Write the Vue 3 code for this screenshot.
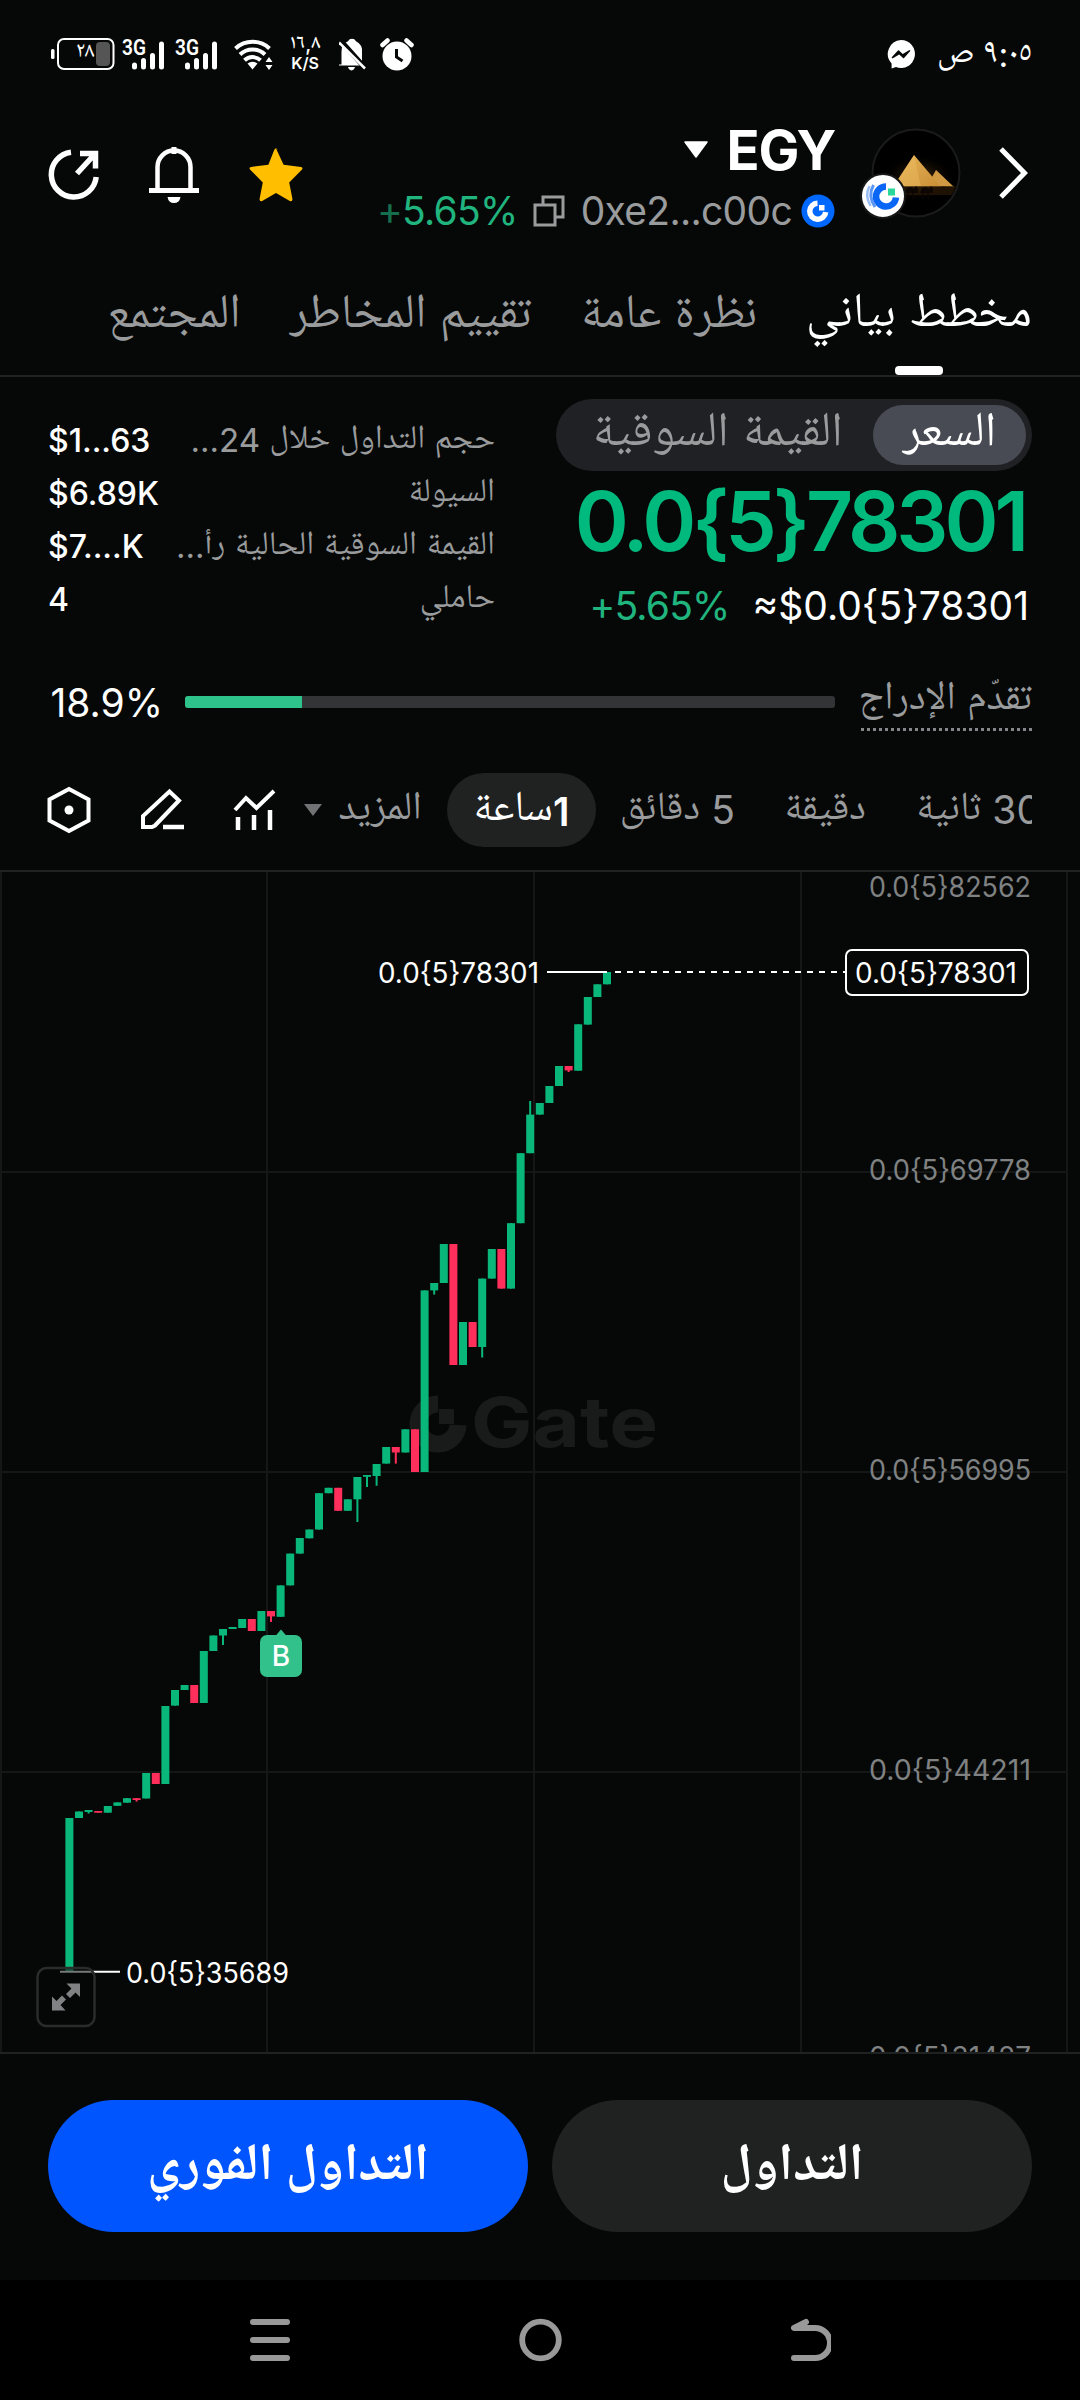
<template>
  <div class="screen" dir="rtl">
    <div class="status-bar">
      <div class="status-side">
        <span class="clock">٩:٠٥ ص</span>
        <svg class="messenger" width="28" height="29" viewBox="0 0 28 29">
          <path d="M14 0a14 14 0 1 1-5 27.1L4.600 28.600V23.500A14 14 0 0 1 14 0z" fill="#fff" />
          <path d="M5.500 17.500l6-6.500 4.200 4 6.800-4.200-6 6.700-4.300-4z" fill="#060807" stroke="#060807" stroke-width="1.500" stroke-linejoin="round" />
        </svg>
      </div>
      <div class="status-icons" dir="ltr">
        <svg width="64" height="34" viewBox="0 0 64 34">
          <rect x="0" y="12" width="3.500" height="10" rx="1.500" fill="#fff" />
          <rect x="7" y="2" width="55.500" height="30" rx="6" fill="none" stroke="#fff" stroke-width="2" />
          <rect x="45" y="5" width="14" height="24" rx="4" fill="#555" />
          <text x="34" y="23" class="battery-text" text-anchor="middle">٢٨</text>
        </svg>
        <svg v-for="n in 2" :key="n" class="signal" width="44" height="34" viewBox="0 0 44 34">
          <text x="0" y="18" class="signal-text" textLength="24" lengthAdjust="spacingAndGlyphs">3G</text>
          <path d="M12.500 28v2M21.500 23.500v6.500M30.500 18.500v11.500M39.500 7v23" stroke="#fff" stroke-width="5" stroke-linecap="round" />
        </svg>
        <svg class="wifi" width="40" height="34" viewBox="0 0 40 34">
          <g fill="none" stroke="#fff" stroke-width="4">
            <path d="M1.500 11.500a25 25 0 0 1 34 0" />
            <path d="M6 17.500a18 18 0 0 1 25 0" />
            <path d="M10.500 23.300a11.500 11.500 0 0 1 16 0" />
          </g>
          <path d="M13.500 26.500q5-3.500 10 0l-5 6z" fill="#fff" />
          <path d="M35 20l3.500 5h-7zM35 33l3.500-5h-7z" fill="#fff" />
        </svg>
        <div class="speed">
          <span>١٦,٨</span>
          <span class="speed-unit">K/S</span>
        </div>
        <svg class="mute" width="28" height="34" viewBox="0 0 28 34">
          <path d="M2.500 28V15A11 11 0 0 1 9 4.200a4.500 4.500 0 0 1 8 0A11 11 0 0 1 23 15v13z" fill="#fff" />
          <path d="M9.500 30.500h6q-1 2.500-3 2.500t-3-2.500zM0 28h25" fill="#fff" stroke="#fff" stroke-width="1" />
          <path d="M2 4l25 28" stroke="#060807" stroke-width="5" />
          <path d="M0 5.500l26 26" stroke="#fff" stroke-width="2.500" />
        </svg>
        <svg class="alarm" width="34" height="34" viewBox="0 0 34 34">
          <circle cx="17" cy="19" r="14.500" fill="#fff" />
          <path d="M2.500 8l5-4.500M31.500 8l-5-4.500" stroke="#fff" stroke-width="4.500" stroke-linecap="round" />
          <path d="M16.500 12v8l6 4" fill="none" stroke="#060807" stroke-width="3" />
        </svg>
      </div>
    </div>

    <header class="header">
      <div class="header-token">
        <svg class="chevron" width="30" height="54" viewBox="0 0 30 54">
          <path d="M2 3l23.500 24L2 51" fill="none" stroke="#fff" stroke-width="5" />
        </svg>
        <div class="avatar">
          <svg width="90" height="90" viewBox="0 0 90 90">
            <defs>
              <clipPath id="avatar-clip"><circle cx="45" cy="45" r="42" /></clipPath>
              <radialGradient id="glow">
                <stop offset="0" stop-color="#5a380f" />
                <stop offset="1" stop-color="#000" stop-opacity="0" />
              </radialGradient>
              <linearGradient id="stone" x1="0" y1="0" x2="1" y2="1">
                <stop offset="0" stop-color="#e9b356" />
                <stop offset="1" stop-color="#c98f38" />
              </linearGradient>
            </defs>
            <circle cx="45" cy="45" r="43.500" fill="#000" stroke="#1b1b1b" stroke-width="2" />
            <g clip-path="url(#avatar-clip)">
              <ellipse cx="48" cy="50" rx="36" ry="24" fill="url(#glow)" />
              <path d="M56 58l9-16 18 17z" fill="#d09a42" />
              <path d="M43 27l27 32H22z" fill="url(#stone)" />
              <path d="M43 27l-21 32h28z" fill="#f3c56b" opacity=".35" />
              <path d="M27 58h58v9H27z" fill="#2b1905" opacity=".7" />
              <path d="M34 65l2-5 4-1 3 2 2-3 2 3v4zM49 65l2-5 4-1 3 2 2-3 2 3v4z" fill="#0d0602" />
              <path d="M37 63v8M42 63v8M52 63v8M57 63v8" stroke="#0d0602" stroke-width="1.500" />
              <text x="28" y="80" class="avatar-text">Egypt</text>
            </g>
          </svg>
          <svg class="chain-badge" width="46" height="46" viewBox="0 0 46 46">
            <circle cx="23" cy="23" r="22" fill="#fff" stroke="#171717" stroke-width="2" />
            <path d="M9.500 13q-5 9.500 1 20" fill="none" stroke="#9cbef5" stroke-width="2.500" />
            <path d="M13.500 12q-6 10.500 1.500 22" fill="none" stroke="#5c97f5" stroke-width="3" />
            <path d="M26 13.500a10 10 0 1 0 10 11" fill="none" stroke="#0a66f5" stroke-width="6.500" />
            <rect x="28" y="15.500" width="7" height="7" fill="#2bd69a" />
          </svg>
        </div>
        <div class="token-info">
          <div class="token-name">
            <span>EGY</span>
            <svg width="26" height="18" viewBox="0 0 26 18">
              <path d="M2 1h22L13 16z" fill="#fff" stroke="#fff" stroke-linejoin="round" stroke-width="1.500" />
            </svg>
          </div>
          <div class="token-sub">
            <svg width="34" height="34" viewBox="0 0 34 34">
              <circle cx="17" cy="17" r="16.500" fill="#0068ff" />
              <path d="M16.500 9.200a8 8 0 1 0 8.200 9" fill="none" stroke="#fff" stroke-width="5.500" />
              <rect x="18" y="11" width="5.500" height="5.500" fill="#fff" />
            </svg>
            <span class="address" dir="ltr">0xe2...c00c</span>
            <svg class="copy" width="32" height="32" viewBox="0 0 32 32">
              <path d="M2 10h20v20H2zM10 9.500V2h20v20h-7" fill="none" stroke="#999b9d" stroke-width="3" />
            </svg>
            <span class="change" dir="ltr"><i>+</i>5.65%</span>
          </div>
        </div>
      </div>
      <div class="header-actions">
        <svg width="56" height="56" viewBox="0 0 56 56">
          <path d="M28 2.500l7.600 16.200 17.400 2.200q2.500.8.800 2.800L41.200 36.500l3.300 16.800q-.3 2.500-2.700 1.600L28 47l-13.800 7.900q-2.400.9-2.700-1.600l3.300-16.800L2.200 23.700q-1.700-2 .8-2.800l17.400-2.200L26.200 4q1.800-3.500 3.600 0z" fill="#ffbf00" />
        </svg>
        <svg width="50" height="58" viewBox="0 0 50 58">
          <path d="M8.500 46V22a16.500 16.500 0 0 1 33 0v24" fill="none" stroke="#fff" stroke-width="4.500" />
          <path d="M0 45.500h50M25 2v7" stroke="#fff" stroke-width="5" />
          <path d="M18.500 52h13q-1 6-6.500 6t-6.500-6z" fill="#fff" />
        </svg>
        <svg width="52" height="52" viewBox="0 0 52 52">
          <path d="M23 4.200A22.500 22.500 0 1 0 48.200 29" fill="none" stroke="#fff" stroke-width="5.500" />
          <path d="M29 25.500L46 7M32 5.500h15.500v15" fill="none" stroke="#fff" stroke-width="5.500" />
        </svg>
      </div>
    </header>

    <nav class="tabs">
      <span v-for="tab in tabs" :key="tab.label" class="tab" :class="{ active: tab.active }">{{ tab.label }}</span>
    </nav>

    <section class="summary">
      <div class="price-box">
        <div class="segment">
          <span class="segment-item active">السعر</span>
          <span class="segment-item">القيمة السوقية</span>
        </div>
        <div class="price" dir="ltr">0.0{5}78301</div>
        <div class="price-sub">
          <span dir="ltr">≈$0.0{5}78301</span>
          <span class="green" dir="ltr">+5.65%</span>
        </div>
      </div>
      <div class="stats">
        <div v-for="row in stats" :key="row.label" class="stat-row">
          <span class="stat-label">{{ row.label }}</span>
          <span class="stat-value" dir="ltr">{{ row.value }}</span>
        </div>
      </div>
    </section>

    <section class="progress">
      <span class="progress-label">تقدّم الإدراج</span>
      <div class="progress-track" dir="ltr">
        <div class="progress-fill" :style="{ width: Math.floor(progress) + '%' }"></div>
      </div>
      <span class="progress-value" dir="ltr">{{ progress }}%</span>
    </section>

    <section class="toolbar">
      <div class="intervals">
        <span class="interval first"><b>30</b> ثانية</span>
        <span class="interval minute">دقيقة</span>
        <span class="interval five"><b>5</b> دقائق</span>
        <span class="interval active"><b>1</b>ساعة</span>
        <span class="interval more">المزيد</span>
        <svg class="more-arrow" width="18" height="12" viewBox="0 0 18 12">
          <path d="M0 0h18L9 12z" fill="#707273" />
        </svg>
      </div>
      <div class="tools">
        <svg width="44" height="44" viewBox="0 0 44 44">
          <path d="M2 22l11-12 10.500 10L41 3" fill="none" stroke="#fff" stroke-width="4" />
          <path d="M5 29v13M21 27v15M37 22v20" stroke="#fff" stroke-width="4.500" />
        </svg>
        <svg width="46" height="44" viewBox="0 0 46 44">
          <path d="M4 39V28L30.500 3.500l9.500 9L16 37.500 13 39z" fill="none" stroke="#fff" stroke-width="4" />
          <path d="M24 39h21" stroke="#fff" stroke-width="4.500" />
        </svg>
        <svg width="44" height="48" viewBox="0 0 44 48">
          <path d="M22 3l19.500 10.500v21L22 45 2.500 34.500v-21z" fill="none" stroke="#fff" stroke-width="4" />
          <circle cx="22" cy="24" r="4.500" fill="#fff" />
        </svg>
      </div>
    </section>

    <section class="chart" dir="ltr">
      <!-- y coordinates follow the screen, so the view box starts below the toolbar -->
      <svg width="1080" height="1180" viewBox="0 872 1080 1180">
        <g stroke="#151717" stroke-width="2">
          <line v-for="x in gridX" :key="'x' + x" :x1="x" :x2="x" y1="872" y2="2052" />
          <line v-for="y in gridY" :key="'y' + y" x1="0" x2="1068" :y1="y" :y2="y" />
        </g>

        <g class="watermark">
          <path d="M438 1404a20 20 0 1 0 20 21" fill="none" stroke="#191b1b" stroke-width="17" />
          <rect x="439" y="1409" width="15" height="15" fill="#191b1b" />
          <text x="471" y="1447" textLength="187" lengthAdjust="spacingAndGlyphs">Gate</text>
        </g>

        <text v-for="l in axisLabels" :key="l.text" class="axis" x="869" :y="l.y" textLength="162" lengthAdjust="spacingAndGlyphs">{{ l.text }}</text>

        <g v-for="(c, i) in candles" :key="i" :fill="c.color">
          <rect :x="c.x - 4" :y="c.top" width="8" :height="c.bottom - c.top" />
          <rect :x="c.x - 1" :y="c.high" width="2" :height="c.low - c.high" />
        </g>

        <path d="M547 972h60M60 1971.700h60" stroke="#fff" stroke-width="2" />
        <path d="M615 972h230" stroke="#fff" stroke-width="2" stroke-dasharray="6 6" />
        <text class="mark" x="378" y="982.500" textLength="161" lengthAdjust="spacingAndGlyphs">0.0{5}78301</text>
        <text class="mark" x="126" y="1982.500" textLength="163" lengthAdjust="spacingAndGlyphs">0.0{5}35689</text>
        <rect x="846" y="950" width="182" height="45" rx="6" fill="#060807" stroke="#fff" stroke-width="2" />
        <text class="mark" x="855" y="983" textLength="162" lengthAdjust="spacingAndGlyphs">0.0{5}78301</text>

        <path d="M281 1629.500l6 7h-12z" fill="#32c18a" />
        <rect x="260" y="1635" width="42" height="42" rx="7" fill="#32c18a" />
        <text class="mark buy" x="281" y="1666" text-anchor="middle">B</text>

        <rect x="37.500" y="1968" width="57" height="58" rx="9" fill="#060807" fill-opacity=".55" stroke="#2a2c2c" stroke-width="2.500" />
        <path d="M66.500 1983.500H80v13.500l-4.500-4.500-5.500 5.500-4-4 5.500-5.500zM52 1996.500l4.500 4.500 5.500-5.500 4 4-5.500 5.500 5 5.500H52z" fill="#808283" />
      </svg>
    </section>

    <section class="actions">
      <button class="btn">التداول</button>
      <button class="btn primary">التداول الفوري</button>
    </section>

    <div class="nav-bar">
      <svg width="40" height="44" viewBox="0 0 40 44">
        <path d="M15 4L3 10h21a13 13 0 0 1 0 30H3" fill="none" stroke="#999" stroke-width="6" stroke-linecap="round" stroke-linejoin="round" />
      </svg>
      <svg width="44" height="44" viewBox="0 0 44 44">
        <circle cx="21.500" cy="22" r="18.300" fill="none" stroke="#999" stroke-width="5.800" />
      </svg>
      <svg width="40" height="44" viewBox="0 0 40 44">
        <path d="M3 4h34M3 22h34M3 40h34" stroke="#999" stroke-width="6" stroke-linecap="round" />
      </svg>
    </div>
  </div>
</template>

<script setup>
import { ref, computed } from 'vue'

const progress = ref(18.9)

const tabs = [
  { label: 'مخطط بياني', active: true },
  { label: 'نظرة عامة' },
  { label: 'تقييم المخاطر' },
  { label: 'المجتمع' }
]

const stats = [
  { label: 'حجم التداول خلال 24...', value: '$1...63' },
  { label: 'السيولة', value: '$6.89K' },
  { label: 'القيمة السوقية الحالية رأ...', value: '$7....K' },
  { label: 'حاملي', value: '4' }
]

const gridX = [1, 267, 534, 801, 1067]
const gridY = [1172, 1472, 1772]

const axisLabels = [
  { text: '0.0{5}82562', y: 896.5 },
  { text: '0.0{5}69778', y: 1180 },
  { text: '0.0{5}56995', y: 1479.5 },
  { text: '0.0{5}44211', y: 1779.5 },
  { text: '0.0{5}31427', y: 2067 }
]

// [top, bottom, down, low, high]
const rows = [
  [1818, 1972], [1811.5, 1818], [1810, 1812, 0, 1813.5], [1811, 1812.7, 1], [1806, 1812.7],
  [1802.4, 1805.8], [1798.2, 1802.7], [1798.2, 1800, 1, 1801.6], [1773, 1798.5], [1773, 1784, 1],
  [1706, 1784], [1690, 1705.6], [1685, 1690], [1685, 1703, 1], [1651, 1703],
  [1635.5, 1651], [1629, 1635.5, 0, 1645], [1627, 1629], [1619, 1628], [1619, 1631, 1],
  [1611, 1631], [1611, 1616.4, 1, 1622], [1585.4, 1616.8], [1553.6, 1585.4], [1538, 1553.6],
  [1529.5, 1538.3], [1493.2, 1529.5], [1487.8, 1493.2], [1487.8, 1510.8, 1], [1499.3, 1510.8],
  [1477, 1499.3, 0, 1522], [1475, 1476.8, 0, 1487], [1464, 1476, 0, 1485.7], [1447, 1463.6], [1447, 1452.5, 1, 1463.6],
  [1429.3, 1452.5], [1429.3, 1472, 1], [1290.4, 1472], [1283, 1290.4, 0, 1294.6], [1244, 1283],
  [1244, 1365, 1], [1322, 1365], [1322, 1347, 1], [1278.6, 1347, 0, 1357.5], [1249, 1278.6],
  [1249, 1288.6, 1], [1223.2, 1288.6], [1153.2, 1223.2], [1114.6, 1153.2, 0, 1153.2, 1101], [1103, 1114.6],
  [1086, 1103], [1066, 1086], [1066, 1070.4, 1, 1072], [1024.3, 1070.7], [997, 1024.6],
  [984.3, 997], [972, 984.3]
]

const candles = computed(() =>
  rows.map(([top, bottom, down, low, high], i) => ({
    x: 69.4 + i * 9.6,
    top,
    bottom,
    low: low || bottom,
    high: high || top,
    color: down ? '#ff2f5b' : '#0ab77b'
  }))
)
</script>

<style>
body {
  background: #060807;
}
</style>

<style scoped>
.screen {
  width: 1080px;
  height: 2400px;
  overflow: hidden;
  display: flex;
  flex-direction: column;
  background: #060807;
  color: #fff;
  font-family: Inter, "Noto Naskh Arabic UI", "Noto Naskh Arabic", "Noto Sans Arabic", "DejaVu Sans", sans-serif;
  white-space: nowrap;
}
svg {
  display: block;
  flex: none;
}
.status-bar {
  height: 108px;
  padding: 0 48px 0 51px;
  display: flex;
  justify-content: space-between;
  align-items: center;
  box-sizing: border-box;
}
.status-side {
  display: flex;
  align-items: center;
  gap: 22px;
}
.clock {
  font-size: 34px;
}
.status-icons {
  display: flex;
  align-items: center;
}
.battery-text {
  font-size: 22px;
  fill: #fff;
}
.signal {
  margin-left: 7px;
  margin-right: 2px;
  overflow: visible;
}
.signal-text {
  font: 600 22px Roboto, sans-serif;
  fill: #fff;
}
.wifi {
  margin-left: 13px;
}
.speed {
  width: 32px;
  margin-left: 15px;
  display: flex;
  flex-direction: column;
  align-items: center;
  font-size: 20px;
  font-weight: 500;
  line-height: 18px;
}
.speed-unit {
  font: 600 16px/20px Inter, sans-serif;
}
.mute {
  margin-left: 18px;
}
.alarm {
  margin-left: 13px;
}
.header {
  height: 148px;
  padding: 0 51px 0 48px;
  display: flex;
  justify-content: space-between;
  box-sizing: border-box;
}
.header-token {
  display: flex;
}
.chevron {
  margin-top: 38px;
}
.avatar {
  position: relative;
  margin: 20px 38px 0 36px;
  width: 90px;
  height: 90px;
}
.chain-badge {
  position: absolute;
  left: -11px;
  bottom: -1px;
}
.avatar-text {
  font: italic 700 13px "Liberation Serif", serif;
  fill: #e5b04a;
}
.token-info {
  display: flex;
  flex-direction: column;
}
.token-name {
  display: flex;
  align-items: center;
  gap: 18px;
  height: 83px;
  font-size: 54.5px;
  font-weight: 700;
  letter-spacing: -1.3px;
}
.token-sub {
  display: flex;
  align-items: center;
  height: 39px;
  font-size: 39px;
}
.address {
  margin: 0 9px 0 16px;
  color: #999b9d;
  letter-spacing: -0.7px;
}
.change {
  margin-right: 15px;
  color: #20b47e;
  letter-spacing: -0.7px;
}
.change i {
  font-style: normal;
  opacity: .6;
}
.header-actions {
  display: flex;
  align-items: center;
  gap: 49px;
  height: 132px;
}
.tabs {
  display: flex;
  gap: 49px;
  height: 119px;
  padding: 0 48px;
  border-bottom: 2px solid #202222;
}
.tab {
  position: relative;
  color: #999b9d;
  font-size: 48px;
  line-height: 119px;
}
.tab.active {
  color: #fff;
  font-size: 48.5px;
}
.tab.active::after {
  content: "";
  position: absolute;
  left: 50%;
  bottom: 0;
  width: 48px;
  height: 9px;
  margin-left: -24px;
  border-radius: 4px;
  background: #fff;
}
.summary {
  display: flex;
  justify-content: space-between;
  height: 283px;
  padding: 22px 48px 0;
  box-sizing: border-box;
}
.price-box {
  width: 476px;
}
.segment {
  display: flex;
  height: 72px;
  padding: 6px;
  border-radius: 36px;
  background: #202124;
  box-sizing: border-box;
}
.segment-item {
  flex: 1;
  text-align: center;
  font-size: 48.3px;
  line-height: 59px;
  color: #999b9d;
}
.segment-item.active {
  flex: 0 0 153px;
  border-radius: 30px;
  background: #484b54;
  color: #fff;
}
.price {
  margin: 6px 7px 0 0;
  font-size: 82px;
  font-weight: 600;
  line-height: 90px;
  letter-spacing: -4.1px;
  text-align: right;
  color: #00b97c;
}
.price-sub {
  display: flex;
  gap: 23px;
  margin: 16px 3px 0 0;
  font-size: 39px;
  line-height: 46px;
}
.green {
  color: #20b47e;
  letter-spacing: -0.8px;
}
.stats {
  width: 447px;
  padding-top: 15px;
}
.stat-row {
  display: flex;
  justify-content: space-between;
  align-items: center;
  height: 53px;
}
.stat-label {
  font-size: 33.1px;
  line-height: 53px;
  color: #999b9d;
}
.stat-value {
  font-size: 32px;
  font-weight: 500;
}
.progress {
  display: flex;
  align-items: center;
  height: 84px;
  padding: 0 48px;
}
.progress-label {
  width: 171px;
  height: 55px;
  font-size: 40px;
  line-height: 53px;
  color: #999b9d;
  border-bottom: 3px dotted #85878a;
}
.progress-track {
  width: 650px;
  height: 12px;
  margin: 0 26px 0 24px;
  border-radius: 3px;
  overflow: hidden;
  background: #333436;
}
.progress-fill {
  height: 100%;
  background: #2ec38a;
}
.progress-value {
  margin-right: -2px;
  font-size: 39px;
}
.toolbar {
  display: flex;
  justify-content: space-between;
  height: 126px;
  padding: 6px 48px 0 47px;
  box-sizing: border-box;
  align-items: center;
}
.intervals {
  display: flex;
  align-items: center;
  width: 730px;
  overflow: hidden;
  font-size: 40px;
  line-height: 76px;
  color: #999b9d;
}
.interval b {
  font-size: 39px;
  font-weight: 400;
}
.interval {
  flex: none;
}
.first {
  margin-right: -9px;
}
.minute {
  margin: 0 50px 0 49px;
}
.interval.active {
  width: 149px;
  height: 74px;
  margin: 0 24px 0 25px;
  border-radius: 37px;
  background: #202121;
  color: #fff;
  font-size: 42.5px;
  text-align: center;
}
.interval.active b {
  font-weight: 600;
}
.more-arrow {
  margin-right: 16px;
}
.tools {
  display: flex;
  align-items: center;
  gap: 48px;
}
.chart {
  height: 1180px;
  border-top: 2px solid #202222;
  border-bottom: 2px solid #202222;
}
.watermark text {
  font: 700 69px Inter, sans-serif;
  fill: #191b1b;
}
.axis {
  font-size: 28px;
  fill: #7f8182;
}
.mark {
  font-size: 28px;
  fill: #fff;
}
.buy {
  font-weight: 500;
}
.actions {
  display: flex;
  gap: 24px;
  height: 226px;
  padding: 46px 48px 0;
  box-sizing: border-box;
}
.btn {
  flex: 1;
  height: 132px;
  padding: 0;
  border: none;
  border-radius: 66px;
  background: #202121;
  color: #fff;
  font: inherit;
  font-size: 52.3px;
  font-weight: 700;
}
.btn.primary {
  background: #0055ff;
}
.nav-bar {
  flex: 1;
  display: flex;
  justify-content: space-between;
  align-items: center;
  padding: 0 249px 0 250px;
  background: #000;
}
</style>
